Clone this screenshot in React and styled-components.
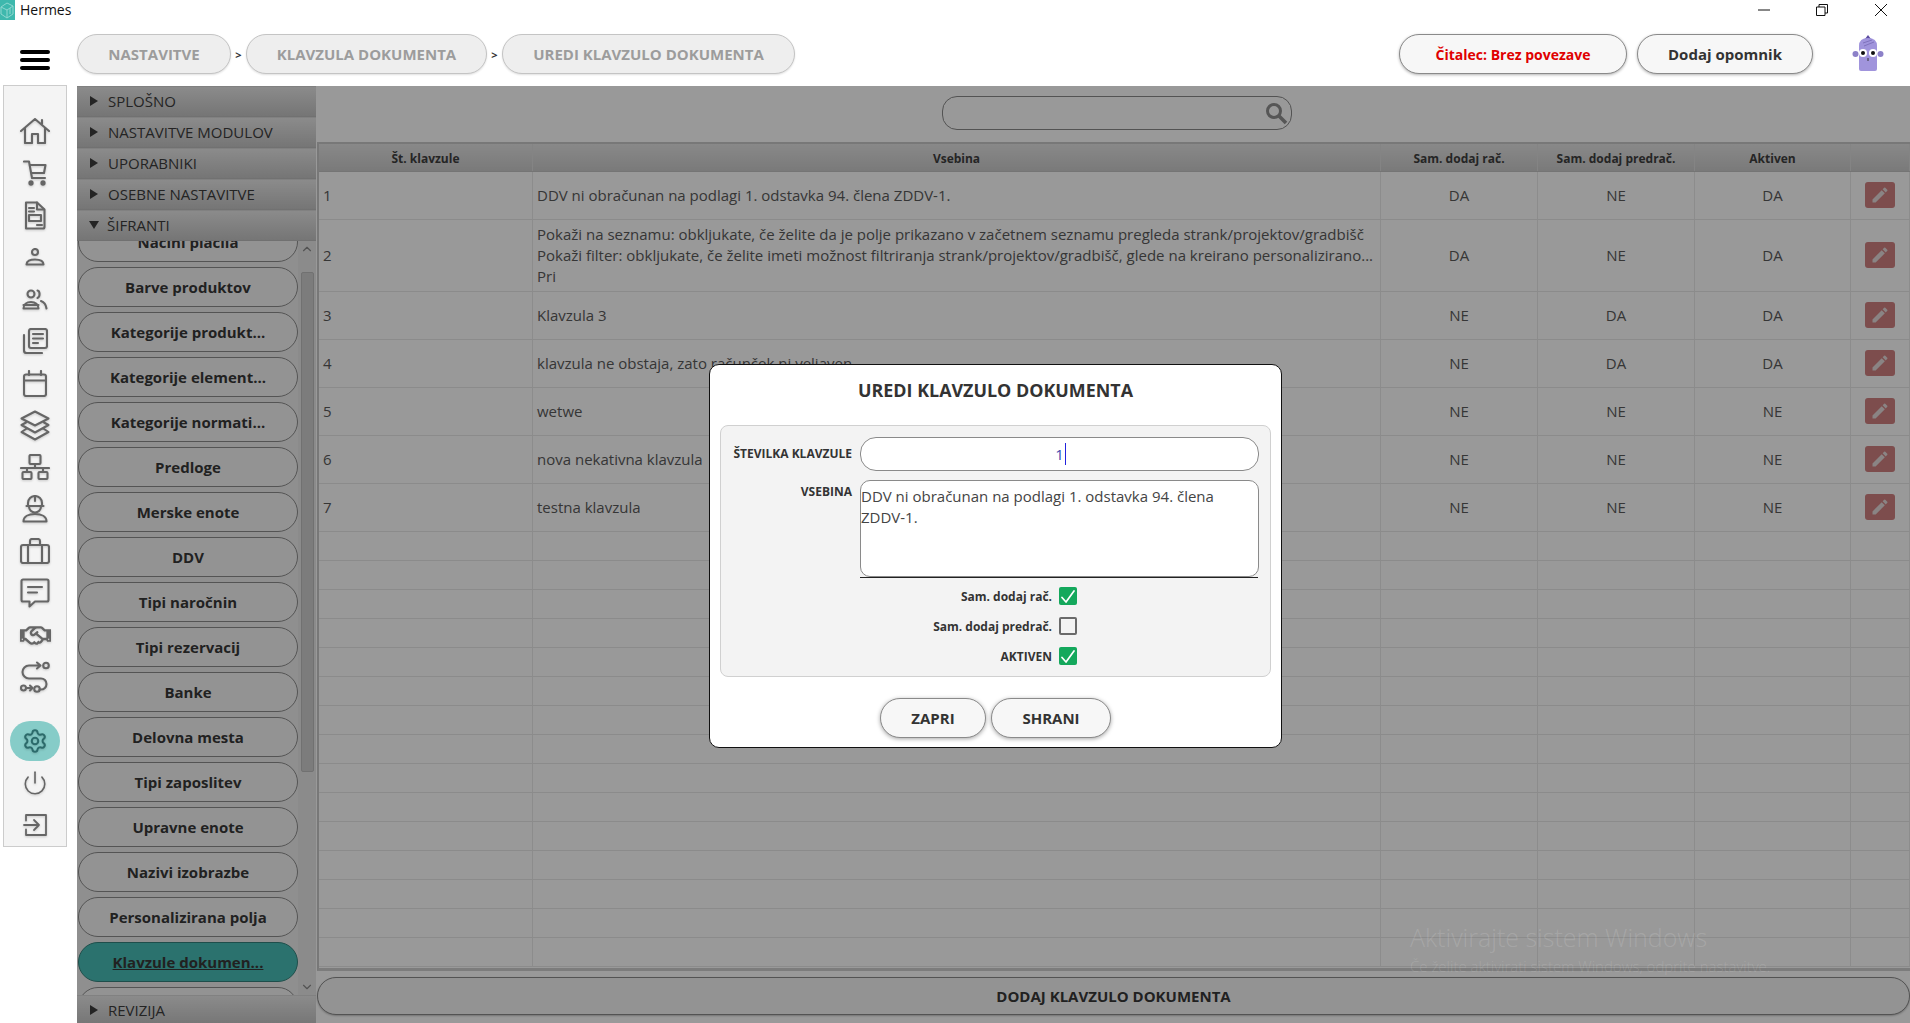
import React from 'react';
import styled, { createGlobalStyle } from 'styled-components';
import { Settings, Power, ChevronUp, ChevronDown } from 'lucide-react';
import { MdEdit } from 'react-icons/md';
import { FaRegHandshake } from 'react-icons/fa';

const GlobalStyle = createGlobalStyle`
    html, body {
        margin: 0;
        padding: 0;
        height: 100%;
        background: #fff;
    }
    * {
        box-sizing: border-box;
    }
    body {
        font-family: 'Open Sans', 'Liberation Sans', sans-serif;
    }
`;

const Page = styled.div`
    position: relative;
    width: 1910px;
    height: 1023px;
    overflow: hidden;
    display: flex;
    flex-direction: column;
`;

const TitleBar = styled.div`
    height: 27px;
    flex-shrink: 0;
    display: flex;
    align-items: flex-start;
`;
const AppLogo = styled.div`
    width: 15px;
    height: 20px;
    background: #3eb8ad;
    display: flex;
    align-items: center;
    justify-content: center;
    overflow: hidden;
`;
const AppName = styled.span`
    margin-left: 5px;
    font-size: 14px;
    line-height: 19px;
    color: #111;
`;
const WinControls = styled.div`
    margin-left: auto;
    display: flex;
`;
const WinButton = styled.div`
    width: 58.5px;
    height: 20px;
    display: flex;
    align-items: center;
    justify-content: center;
`;

const Header = styled.div`
    height: 59px;
    flex-shrink: 0;
    display: flex;
    align-items: flex-start;
    padding: 7px 26px 0 20px;
`;
const Burger = styled.div`
    width: 30px;
    height: 40px;
    margin: 6px 27px 0 0;
    display: flex;
    flex-direction: column;
    justify-content: center;
    gap: 4px;
    span {
        display: block;
        height: 4px;
        border-radius: 2px;
        background: #000;
    }
`;
const Crumbs = styled.div`
    display: flex;
    align-items: center;
`;
const Crumb = styled.div`
    height: 40px;
    width: ${(p) => p.$w}px;
    display: flex;
    align-items: center;
    justify-content: center;
    border: 1px solid #c4c4c4;
    border-radius: 20px;
    background: #eeeeee;
    color: #9c9c9c;
    font-size: 15px;
    font-weight: 700;
    box-shadow: 0 1px 2px rgba(0, 0, 0, 0.12);
`;
const CrumbSep = styled.span`
    width: 15px;
    text-align: center;
    font-size: 11px;
    font-weight: 700;
    color: #333;
`;
const HeaderRight = styled.div`
    margin-left: auto;
    display: flex;
    align-items: center;
    gap: 10px;
`;
const PillButton = styled.div`
    height: 40px;
    width: ${(p) => p.$w}px;
    display: flex;
    align-items: center;
    justify-content: center;
    border: 1px solid #8a8a8a;
    border-radius: 20px;
    background: #f7f7f7;
    color: ${(p) => p.$color || '#333'};
    font-size: ${(p) => p.$size || 15}px;
    font-weight: 700;
    box-shadow: 0 1px 3px rgba(0, 0, 0, 0.3);
`;
const Avatar = styled.div`
    width: 32px;
    height: 40px;
    margin-left: 29px;
    display: flex;
`;

const Body = styled.div`
    flex: 1;
    min-height: 0;
    display: flex;
`;

const Rail = styled.nav`
    width: 64px;
    height: 762px;
    margin: -1px 10px 0 3px;
    padding-top: 24px;
    flex-shrink: 0;
    display: flex;
    flex-direction: column;
    align-items: center;
    background: #f4f4f4;
    border: 1px solid #cccccc;
`;
const RailItem = styled.div`
    width: 50px;
    height: 42px;
    flex-shrink: 0;
    display: flex;
    align-items: center;
    justify-content: center;
    color: #666;
    margin-top: ${(p) => (p.$active ? '22px' : '0')};
    svg {
        filter: drop-shadow(0 1px 1px rgba(0, 0, 0, 0.18));
    }
    ${(p) => p.$active && `
        color: #2c6b6b;
        &::before {
            content: '';
            position: absolute;
            width: 50px;
            height: 40px;
            border-radius: 20px;
            background: #86ccc8;
        }
        svg { position: relative; }
    `}
`;

const Accordion = styled.div`
    width: 239px;
    flex-shrink: 0;
    overflow: hidden;
    background: #efefef;
`;
const AccHeader = styled.div`
    height: 31px;
    display: flex;
    align-items: center;
    padding: 0 0 2px 13px;
    background: linear-gradient(#e8e8e8, #c4c4c4);
    border-top: 1px solid #d8d8d8;
    border-bottom: 1px solid #bdbdbd;
    color: #3c3c3c;
    font-size: 15px;
`;
const Triangle = styled.span`
    width: 0;
    height: 0;
    margin-right: ${(p) => (p.$open ? '8px' : '10px')};
    margin-left: ${(p) => (p.$open ? '-1px' : '0')};
    border-style: solid;
    border-color: transparent;
    ${(p) => p.$open
        ? 'border-width: 8px 5.5px 0 5.5px; border-top-color: #3c3c3c;'
        : 'border-width: 5.5px 0 5.5px 8px; border-left-color: #3c3c3c;'}
`;
const ListWrap = styled.div`
    height: 754px;
    display: flex;
`;
const ListClip = styled.div`
    width: 221px;
    overflow: hidden;
    padding-left: 1px;
`;
const List = styled.div`
    margin-top: -19px;
    display: flex;
    flex-direction: column;
    gap: 5px;
`;
const NavButton = styled.div`
    height: 40px;
    flex-shrink: 0;
    display: flex;
    align-items: center;
    justify-content: center;
    border: 1px solid ${(p) => (p.$active ? '#34837d' : '#8c8c8c')};
    border-radius: 20px;
    background: ${(p) => (p.$active ? '#48bfb7' : '#f6f6f6')};
    color: #383838;
    font-size: 15px;
    font-weight: 700;
    text-decoration: ${(p) => (p.$active ? 'underline' : 'none')};
`;
const ScrollTrack = styled.div`
    width: 18px;
    display: flex;
    flex-direction: column;
    align-items: center;
    background: #e8e8e8;
    color: #8a8a8a;
`;
const ScrollThumb = styled.div`
    width: 13px;
    height: 500px;
    margin: 16px 0 208px;
    background: #cfcfcf;
    border: 1px solid #bcbcbc;
    border-radius: 2px;
`;

const Main = styled.div`
    flex: 1;
    min-width: 0;
    display: flex;
    flex-direction: column;
`;
const SearchRow = styled.div`
    height: 56px;
    flex-shrink: 0;
    padding-left: 626px;
    padding-top: 10px;
`;
const SearchBox = styled.div`
    width: 350px;
    height: 34px;
    display: flex;
    align-items: center;
    justify-content: flex-end;
    padding-right: 3px;
    border: 1px solid #8a8a8a;
    border-radius: 15px;
`;

const Table = styled.div`
    flex: 1;
    min-height: 0;
    overflow: hidden;
    margin-left: 1px;
    border-top: 2px solid #c8c8c8;
    border-left: 2px solid #c8c8c8;
    border-bottom: 3px solid #cfcfcf;
`;
const Row = styled.div`
    display: grid;
    grid-template-columns: 214px 848px 157px 157px 156px 1fr;
    height: ${(p) => p.$h}px;
    border-bottom: 1px solid #e8e8e8;
`;
const HeadRow = styled(Row)`
    background: linear-gradient(#e4e4e4, #cbcbcb);
    border-bottom: 1px solid #c4c4c4;
`;
const HeadCell = styled.div`
    display: flex;
    align-items: center;
    justify-content: center;
    padding-top: 1px;
    border-right: 1px solid #dcdcdc;
    color: #3e3e3e;
    font-size: 12px;
    font-weight: 700;
`;
const Cell = styled.div`
    display: flex;
    flex-direction: column;
    justify-content: center;
    align-items: ${(p) => (p.$center ? 'center' : 'flex-start')};
    padding-left: ${(p) => (p.$center ? 0 : 4)}px;
    padding-bottom: 1px;
    border-right: 1px solid #eaeaea;
    color: #5a5a5a;
    font-size: 15px;
    line-height: 21px;
    white-space: nowrap;
    overflow: hidden;
`;
const EditButton = styled.div`
    width: 30px;
    height: 26px;
    display: flex;
    align-items: center;
    justify-content: center;
    border-radius: 3px;
    background: #d08080;
    color: #e6dcdc;
`;

const Footer = styled.div`
    height: 52px;
    flex-shrink: 0;
    padding: 6px 0 0 1px;
`;
const AddButton = styled.div`
    height: 38px;
    display: flex;
    align-items: center;
    justify-content: center;
    border: 1px solid #8a8a8a;
    border-radius: 19px;
    background: #f6f6f6;
    color: #383838;
    font-size: 15px;
    font-weight: 700;
    box-shadow: 0 1px 2px rgba(0, 0, 0, 0.25);
`;

const Overlay = styled.div`
    position: absolute;
    left: 77px;
    top: 86px;
    right: 0;
    bottom: 0;
    padding: 3px 0 0 4px;
    background: rgba(0, 0, 0, 0.4);
    display: flex;
    align-items: center;
    justify-content: center;
`;
const Modal = styled.div`
    width: 573px;
    height: 384px;
    padding: 13px 10px 0;
    background: #fff;
    border: 1px solid #111;
    border-radius: 10px;
`;
const ModalTitle = styled.div`
    height: 24px;
    margin-bottom: 23px;
    text-align: center;
    color: #333;
    font-size: 17.9px;
    line-height: 24px;
    font-weight: 700;
`;
const ModalPanel = styled.div`
    height: 252px;
    padding: 11px 12px 0 0;
    background: #f3f3f3;
    border: 1px solid #d0d0d0;
    border-radius: 8px;
`;
const FormRow = styled.div`
    display: grid;
    grid-template-columns: 131px 399px;
    column-gap: 8px;
    margin-bottom: 9px;
`;
const FormLabel = styled.div`
    text-align: right;
    color: #333;
    font-size: 12px;
    font-weight: 700;
    line-height: ${(p) => p.$lh}px;
`;
const NumberField = styled.div`
    height: 34px;
    display: flex;
    align-items: center;
    justify-content: center;
    background: #fff;
    border: 1px solid #8a8a8a;
    border-radius: 16px;
    color: #3a4ab0;
    font-size: 15px;
    padding-left: 2px;
`;
const Caret = styled.span`
    display: inline-block;
    width: 1px;
    height: 22px;
    margin-left: 1px;
    background: #2222dd;
`;
const TextBox = styled.textarea`
    display: block;
    width: 399px;
    height: 97px;
    padding: 5px 0;
    resize: none;
    overflow: hidden;
    background: #fff;
    border: 1px solid #8a8a8a;
    border-radius: 10px;
    outline: none;
    color: #444;
    font-family: 'Open Sans', 'Liberation Sans', sans-serif;
    font-size: 15px;
    line-height: 21px;
`;
const BlackLine = styled.div`
    width: 398px;
    height: 1px;
    margin: -9px 0 9px 139px;
    background: #222;
`;
const CheckRow = styled.div`
    width: 356px;
    height: 18px;
    margin-bottom: 12px;
    display: flex;
    align-items: center;
    justify-content: flex-end;
    gap: 7px;
    color: #333;
    font-size: 12px;
    font-weight: 700;
`;
const CheckBox = styled.div`
    width: 18px;
    height: 18px;
    flex-shrink: 0;
    display: flex;
    align-items: center;
    justify-content: center;
    border-radius: 2px;
    background: ${(p) => (p.$on ? '#14a85c' : 'transparent')};
    border: ${(p) => (p.$on ? 'none' : '2px solid #6a6a6a')};
`;
const ModalActions = styled.div`
    margin-top: 21px;
    display: flex;
    justify-content: center;
    gap: 5px;
`;
const ModalButton = styled(PillButton)`
    box-shadow: 0 1px 4px rgba(0, 0, 0, 0.35);
`;

const Watermark = styled.div`
    position: absolute;
    left: 1410px;
    top: 921px;
    color: rgba(255, 255, 255, 0.14);
    font-weight: 300;
    white-space: nowrap;
    pointer-events: none;
`;
const WatermarkBig = styled.div`
    font-size: 25px;
    line-height: 32px;
`;
const WatermarkSmall = styled.div`
    font-size: 15px;
    line-height: 20px;
    margin-top: 3px;
`;

function Ico({ w, h, children, sw = 2.1 }) {
    return (
        <svg width={w} height={h} viewBox={`0 0 ${w} ${h}`} fill="none" stroke="currentColor" strokeWidth={sw} strokeLinecap="round" strokeLinejoin="round">
            {children}
        </svg>
    );
}

const railIcons = [
    <Ico w={30} h={26} key="home"><path d="M1 13 15 1l14 12M5 10v15h7v-9h6v9h7V10M22 2v4" /></Ico>,
    <Ico w={24} h={26} key="cart"><path d="M1 1.5h5l3 16.5h13M6.5 5h16l-1.5 8H8.5" /><circle cx="8" cy="23" r="1.6" fill="currentColor" /><circle cx="20" cy="23" r="1.6" fill="currentColor" /></Ico>,
    <Ico w={22} h={29} key="doc"><path d="M2 1.5h11l7.5 7V26a1.500 1.500 0 0 1-1.500 1.500H2z" /><path d="M13 1.500V8.500h7M5 7h5M5 10.500h5M5 14h12v6H5zM13 24h5" /></Ico>,
    <Ico w={20} h={18} key="user"><circle cx="10" cy="4" r="3" /><path d="M1.500 16.500c0-3.500 3.500-5 8.500-5s8.500 1.500 8.500 5z" /></Ico>,
    <Ico w={26} h={21} key="users"><circle cx="9" cy="5" r="3.500" /><path d="M1.500 19.500c0-4 3-6.500 7.500-6.500s7.500 2.500 7.500 6.500zM1.500 16h15" /><path d="M15.500 1.500c2.500.5 3 6 0 7.500M19 12c3 1 5 4 5.500 7.500" /></Ico>,
    <Ico w={26} h={26} key="copies"><rect x="7" y="1" width="18" height="19" rx="2" /><path d="M2 7v15.500A2.500 2.500 0 0 0 4.500 25H20M11 6h10M11 10.500h10M11 15h5" /></Ico>,
    <Ico w={24} h={27} key="calendar"><rect x="1" y="4.500" width="22" height="21.500" rx="2" /><path d="M6 1v4M18 1v4M1 10.500h22" /></Ico>,
    <Ico w={30} h={31} key="layers"><path d="M15 1.500 28.500 8.500 15 15.500 1.500 8.500zM6 12.500 1.500 15 15 22.500 28.500 15 24 12.500M6 19l-4.500 3L15 29.500 28.500 22 24 19" /></Ico>,
    <Ico w={30} h={26} key="network"><rect x="9.500" y="1" width="11" height="9" rx="1" /><rect x="2.500" y="18" width="9" height="7" rx="1" /><rect x="18.500" y="18" width="9" height="7" rx="1" /><path d="M15 10v4M1 14h28M7 14v4M23 14v4" /></Ico>,
    <Ico w={26} h={28} key="worker"><path d="M6 11V8a7 7 0 0 1 14 0v3zM4.500 11h17M7 11.500a6 6 0 0 0 12 0M13 1.500V6" /><path d="M1.500 26.500c0-5 5-7.500 11.500-7.500s11.500 2.500 11.500 7.500z" /></Ico>,
    <Ico w={30} h={26} key="briefcase"><rect x="1" y="7" width="28" height="18" rx="2" /><path d="M10 7V3a2 2 0 0 1 2-2h6a2 2 0 0 1 2 2v4M8 7v18M22 7v18" /></Ico>,
    <Ico w={30} h={30} key="chat"><path d="M3 1.500h24A1.500 1.500 0 0 1 28.500 3v19a1.500 1.500 0 0 1-1.500 1.500H15L9.500 28.500v-5H3A1.500 1.500 0 0 1 1.500 22V3A1.500 1.500 0 0 1 3 1.500z" /><path d="M8 9h14M8 14.500h9" /></Ico>,
    <FaRegHandshake key="hands" size={31} />,
    <Ico w={30} h={32} key="route"><circle cx="26" cy="4.500" r="2.800" /><path d="M20 4.500H9a6.500 6.500 0 0 0 0 13h12a5.500 5.500 0 0 1 0 11h-1.500M17 1.500l3.500 3-3.500 3" /><circle cx="3.500" cy="27" r="2.500" /><circle cx="17" cy="28" r="2.800" /><path d="M7 27h5M10 24.500l2.500 2.500-2.500 2.500" /></Ico>,
];

const shifrants = [
    'Načini plačila', 'Barve produktov', 'Kategorije produkt...', 'Kategorije element...',
    'Kategorije normati...', 'Predloge', 'Merske enote', 'DDV', 'Tipi naročnin',
    'Tipi rezervacij', 'Banke', 'Delovna mesta', 'Tipi zaposlitev', 'Upravne enote',
    'Nazivi izobrazbe', 'Personalizirana polja',
];

const clauses = [
    { nr: 1, h: 48, lines: ['DDV ni obračunan na podlagi 1. odstavka 94. člena ZDDV-1.'], a: 'DA', b: 'NE', c: 'DA' },
    {
        nr: 2,
        h: 72,
        lines: [
            'Pokaži na seznamu: obkljukate, če želite da je polje prikazano v začetnem seznamu pregleda strank/projektov/gradbišč',
            'Pokaži filter: obkljukate, če želite imeti možnost filtriranja strank/projektov/gradbišč, glede na kreirano personalizirano...',
            'Pri',
        ],
        a: 'DA',
        b: 'NE',
        c: 'DA',
    },
    { nr: 3, h: 48, lines: ['Klavzula 3'], a: 'NE', b: 'DA', c: 'DA' },
    { nr: 4, h: 48, lines: ['klavzula ne obstaja, zato računček ni veljaven'], a: 'NE', b: 'DA', c: 'DA' },
    { nr: 5, h: 48, lines: ['wetwe'], a: 'NE', b: 'NE', c: 'NE' },
    { nr: 6, h: 48, lines: ['nova nekativna klavzula'], a: 'NE', b: 'NE', c: 'NE' },
    { nr: 7, h: 48, lines: ['testna klavzula'], a: 'NE', b: 'NE', c: 'NE' },
];

const checkMark = (
    <svg width="14" height="13" viewBox="0 0 14 13" fill="none" stroke="#fff" strokeWidth="1.700" strokeLinecap="round" strokeLinejoin="round">
        <path d="M1 7.500 5 12 13 1" />
    </svg>
);

function App() {
    return (
        <Page>
            <GlobalStyle />
            <TitleBar>
                <AppLogo>
                    <svg width="15" height="18" viewBox="0 0 15 18" fill="none" stroke="#8fd8d0" strokeWidth="1">
                        <path d="M1 6 7 2l6 3v8l-6 4-6-4zM1 6l6 3 6-4M7 9v8M10 7v6" />
                    </svg>
                </AppLogo>
                <AppName>Hermes</AppName>
                <WinControls>
                    <WinButton>
                        <svg width="12" height="2" viewBox="0 0 12 2"><path d="M0 1h12" stroke="#111" strokeWidth="1" /></svg>
                    </WinButton>
                    <WinButton>
                        <svg width="12" height="12" viewBox="0 0 12 12" fill="none" stroke="#111" strokeWidth="1"><path d="M.5 3h8.500v8.500H.5zM3 3V.5h8.500V9H9" /></svg>
                    </WinButton>
                    <WinButton>
                        <svg width="12" height="12" viewBox="0 0 12 12" stroke="#111" strokeWidth="1"><path d="M0 0l12 12M12 0 0 12" /></svg>
                    </WinButton>
                </WinControls>
            </TitleBar>

            <Header>
                <Burger><span /><span /><span /></Burger>
                <Crumbs>
                    <Crumb $w={154}>NASTAVITVE</Crumb>
                    <CrumbSep>&gt;</CrumbSep>
                    <Crumb $w={241}>KLAVZULA DOKUMENTA</Crumb>
                    <CrumbSep>&gt;</CrumbSep>
                    <Crumb $w={293}>UREDI KLAVZULO DOKUMENTA</Crumb>
                </Crumbs>
                <HeaderRight>
                    <PillButton $w={228} $size={14} $color="#e00000">Čitalec: Brez povezave</PillButton>
                    <PillButton $w={176}>Dodaj opomnik</PillButton>
                    <Avatar>
                        <svg width="32" height="40" viewBox="0 0 32 40">
                            <path d="M13 5 16 1l3 4z" fill="#5a4aa0" />
                            <circle cx="3.500" cy="20" r="3" fill="#8c80c8" />
                            <circle cx="28.500" cy="20" r="3" fill="#8c80c8" />
                            <path d="M7 12q0-8 9-8t9 8v23q0 2-2 2H9q-2 0-2-2z" fill="#a094dc" />
                            <path d="M11 9l9-3M12 12l10-4" stroke="#7f72bc" strokeWidth="1" fill="none" />
                            <circle cx="11" cy="19" r="4" fill="#fff" />
                            <circle cx="21" cy="19" r="4" fill="#fff" />
                            <circle cx="11" cy="19" r="2" fill="#111" />
                            <circle cx="21" cy="19" r="2" fill="#111" />
                            <path d="M16 24v3" stroke="#333" strokeWidth="1" />
                        </svg>
                    </Avatar>
                </HeaderRight>
            </Header>

            <Body>
                <Rail>
                    {railIcons.map((icon, i) => <RailItem key={i}>{icon}</RailItem>)}
                    <RailItem $active><Settings size={26} strokeWidth={1.900} /></RailItem>
                    <RailItem><Power size={26} strokeWidth={1.500} /></RailItem>
                    <RailItem>
                        <Ico w={24} h={22} sw={1.800}><path d="M3 6.500V1h20v20H3v-5.500M1 11h15M11 6l5 5-5 5" /></Ico>
                    </RailItem>
                </Rail>

                <Accordion>
                    <AccHeader><Triangle />SPLOŠNO</AccHeader>
                    <AccHeader><Triangle />NASTAVITVE MODULOV</AccHeader>
                    <AccHeader><Triangle />UPORABNIKI</AccHeader>
                    <AccHeader><Triangle />OSEBNE NASTAVITVE</AccHeader>
                    <AccHeader><Triangle $open />ŠIFRANTI</AccHeader>
                    <ListWrap>
                        <ListClip>
                            <List>
                                {shifrants.map((name) => <NavButton key={name}>{name}</NavButton>)}
                                <NavButton $active>Klavzule dokumen...</NavButton>
                                <NavButton />
                            </List>
                        </ListClip>
                        <ScrollTrack>
                            <ChevronUp size={14} style={{ marginTop: 1 }} />
                            <ScrollThumb />
                            <ChevronDown size={14} />
                        </ScrollTrack>
                    </ListWrap>
                    <AccHeader><Triangle />REVIZIJA</AccHeader>
                </Accordion>

                <Main>
                    <SearchRow>
                        <SearchBox>
                            <svg width="24" height="24" viewBox="0 0 24 24" fill="none" stroke="#8f8f8f" strokeWidth="3">
                                <circle cx="10" cy="10" r="6.500" />
                                <path d="M15 15l7 7" strokeWidth="3.500" />
                            </svg>
                        </SearchBox>
                    </SearchRow>
                    <Table>
                        <HeadRow $h={28}>
                            <HeadCell>Št. klavzule</HeadCell>
                            <HeadCell>Vsebina</HeadCell>
                            <HeadCell>Sam. dodaj rač.</HeadCell>
                            <HeadCell>Sam. dodaj predrač.</HeadCell>
                            <HeadCell>Aktiven</HeadCell>
                            <HeadCell />
                        </HeadRow>
                        {clauses.map((c) => (
                            <Row key={c.nr} $h={c.h}>
                                <Cell>{c.nr}</Cell>
                                <Cell>{c.lines.map((l) => <div key={l}>{l}</div>)}</Cell>
                                <Cell $center>{c.a}</Cell>
                                <Cell $center>{c.b}</Cell>
                                <Cell $center>{c.c}</Cell>
                                <Cell $center>
                                    <EditButton><MdEdit size={20} /></EditButton>
                                </Cell>
                            </Row>
                        ))}
                        {Array.from({ length: 15 }, (_, i) => (
                            <Row key={i} $h={29}>
                                <Cell /><Cell /><Cell /><Cell /><Cell /><Cell />
                            </Row>
                        ))}
                    </Table>
                    <Footer>
                        <AddButton>DODAJ KLAVZULO DOKUMENTA</AddButton>
                    </Footer>
                </Main>
            </Body>

            <Overlay>
                <Modal>
                    <ModalTitle>UREDI KLAVZULO DOKUMENTA</ModalTitle>
                    <ModalPanel>
                        <FormRow>
                            <FormLabel $lh={34}>ŠTEVILKA KLAVZULE</FormLabel>
                            <NumberField>1<Caret /></NumberField>
                        </FormRow>
                        <FormRow>
                            <FormLabel $lh={24}>VSEBINA</FormLabel>
                            <TextBox readOnly value="DDV ni obračunan na podlagi 1. odstavka 94. člena ZDDV-1." />
                        </FormRow>
                        <BlackLine />
                        <CheckRow>Sam. dodaj rač.<CheckBox $on>{checkMark}</CheckBox></CheckRow>
                        <CheckRow>Sam. dodaj predrač.<CheckBox /></CheckRow>
                        <CheckRow>AKTIVEN<CheckBox $on>{checkMark}</CheckBox></CheckRow>
                    </ModalPanel>
                    <ModalActions>
                        <ModalButton $w={106}>ZAPRI</ModalButton>
                        <ModalButton $w={120}>SHRANI</ModalButton>
                    </ModalActions>
                </Modal>
            </Overlay>

            <Watermark>
                <WatermarkBig>Aktivirajte sistem Windows</WatermarkBig>
                <WatermarkSmall>Če želite aktivirati sistem Windows, odprite nastavitve.</WatermarkSmall>
            </Watermark>
        </Page>
    );
}

export default App;
